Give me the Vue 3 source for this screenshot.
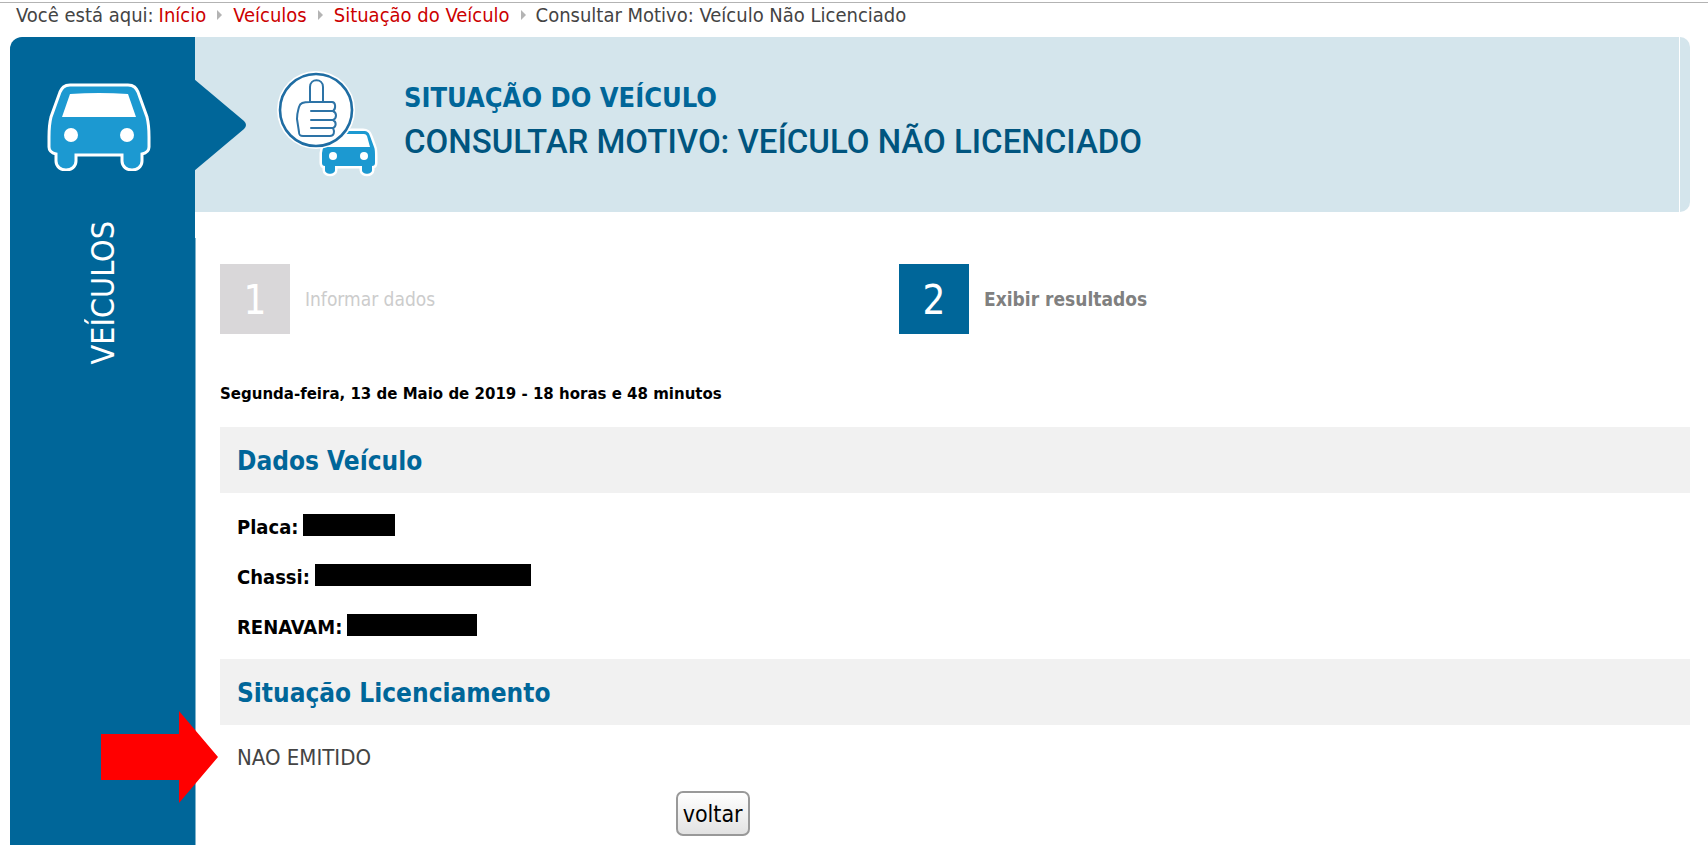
<script setup>
const trail = [
  { label: 'Início', href: '#inicio' },
  { label: 'Veículos', href: '#veiculos' },
  { label: 'Situação do Veículo', href: '#situacao' },
]

const steps = [
  { number: 1, label: 'Informar dados', active: false },
  { number: 2, label: 'Exibir resultados', active: true },
]

// Values are masked; only the length of each bar is kept.
const vehicle = [
  { label: 'Placa:', width: 92 },
  { label: 'Chassi:', width: 216 },
  { label: 'RENAVAM:', width: 130 },
]
</script>

<template>
  <div class="page">
    <nav class="breadcrumb" aria-label="Você está aqui">
      <span>Você está aqui:</span>
      <template v-for="item in trail" :key="item.label">
        <a :href="item.href">{{ item.label }}</a>
        <svg class="sep" viewBox="0 0 5 10" aria-hidden="true"><path d="M0 0 5 5 0 10Z" fill="#b4b4b4" /></svg>
      </template>
      <span>Consultar Motivo: Veículo Não Licenciado</span>
    </nav>

    <div class="body">
      <aside class="sidebar">
        <svg class="car" viewBox="0 0 104 88" aria-hidden="true">
          <path d="M23 2H81C87 2 89 5 91 9L100 34C102 42 102 46 102 54V64C102 68 99 70 95 71V78C95 90 75 90 75 78V72H29V78C29 90 9 90 9 78V71C5 70 2 68 2 64V54C2 46 2 42 4 34L13 9C15 5 17 2 23 2Z" fill="#1c99d1" stroke="#fff" stroke-width="3" />
          <path d="M23 11Q52 9 81 11L89 34H15Z" fill="#fff" />
          <circle cx="24" cy="52" r="7" fill="#fff" />
          <circle cx="80" cy="52" r="7" fill="#fff" />
        </svg>
        <span class="area">VEÍCULOS</span>
        <svg class="pointer" viewBox="0 0 52 94" aria-hidden="true"><path d="M0 1 50 43Q54 47 50 51L0 93Z" fill="#006699" /></svg>
      </aside>

      <main class="main">
        <header class="banner">
          <svg class="service" viewBox="0 0 104 110" aria-hidden="true">
            <g fill="#1c99d1">
              <path d="M56 60H87C92 60 93 62 94 65L98 76C99 78 99 82 99 86V92C99 94 98 95 96 95V99C96 104 86 104 86 99V95H59V99C59 104 49 104 49 99V95C47 95 46 94 46 92V82Q46 78 49 74Z" stroke="#fff" stroke-width="5" stroke-linejoin="round" />
              <path d="M56 60H87C92 60 93 62 94 65L98 76C99 78 99 82 99 86V92C99 94 98 95 96 95V99C96 104 86 104 86 99V95H59V99C59 104 49 104 49 99V95C47 95 46 94 46 92V82Q46 78 49 74Z" />
            </g>
            <path d="M56 63H88Q90 63 91 65L94 76H51Z" fill="#fff" />
            <circle cx="57" cy="85" r="4" fill="#fff" />
            <circle cx="88" cy="85" r="4" fill="#fff" />
            <circle cx="40" cy="39" r="39" fill="#fff" />
            <circle cx="40" cy="39" r="36" fill="#fff" stroke="#1f6da3" stroke-width="2.6" />
            <path d="M34 31V16C34 7 47 7 47 16V31H56C60 31 60 38 57 40C61 42 61 47 57 49C61 51 60 56 57 57C59 61 58 65 54 65H27C23 65 23 63 23 61L21 48C21 42 22 40 23 36C24 32 27 31 34 31ZM34 31H47M35 40H57M35 49H57M35 57H57" fill="none" stroke="#2d73a6" stroke-width="2" stroke-linejoin="round" stroke-linecap="round" />
          </svg>
          <div class="titles">
            <p class="group">SITUAÇÃO DO VEÍCULO</p>
            <h1>CONSULTAR MOTIVO: VEÍCULO NÃO LICENCIADO</h1>
          </div>
        </header>

        <div class="content">
          <ol class="steps">
            <li v-for="step in steps" :key="step.number" class="step" :class="{ active: step.active }">
              <span class="number">{{ step.number }}</span>
              <span>{{ step.label }}</span>
            </li>
          </ol>

          <p class="date">Segunda-feira, 13 de Maio de 2019 - 18 horas e 48 minutos</p>

          <section>
            <h2>Dados Veículo</h2>
            <dl class="fields">
              <div v-for="field in vehicle" :key="field.label" class="field">
                <dt>{{ field.label }}</dt>
                <dd class="mask" :style="{ width: field.width + 'px' }"></dd>
              </div>
            </dl>
          </section>

          <section>
            <h2>Situação Licenciamento</h2>
            <p class="status">
              NAO EMITIDO
              <svg class="arrow" viewBox="0 0 117 92" aria-hidden="true"><path d="M0 23H78V0L117 46 78 92V69H0Z" fill="#f00" /></svg>
            </p>
          </section>

          <div class="actions"><button type="button">voltar</button></div>
        </div>
      </main>
    </div>
  </div>
</template>

<style>
body {
  background: #fff;
}
</style>

<style scoped>
.page {
  box-sizing: border-box;
  min-height: 100vh;
  display: flex;
  flex-direction: column;
  padding: 2px 18px 0 10px;
  background: linear-gradient(#b3b3b3, #b3b3b3) 0 2px / 100% 1px no-repeat;
  font-family: "DejaVu Sans Condensed", "Noto Sans", sans-serif;
  font-size: 20px;
  color: #444;
}
.breadcrumb {
  display: flex;
  align-items: center;
  height: 25px;
  padding: 0 6px 10px;
  white-space: nowrap;
}
.breadcrumb a {
  margin-left: 5px;
  color: #c00;
  text-decoration: none;
}
.sep {
  width: 5px;
  height: 10px;
  margin: 0 6px 0 11px;
}
.sep + span {
  margin-left: 4px;
}
.body {
  flex: 1;
  display: flex;
}
.sidebar {
  position: relative;
  flex: none;
  width: 185px;
  display: flex;
  flex-direction: column;
  align-items: center;
  background: #006699;
  border-top-left-radius: 12px;
}
.car {
  width: 104px;
  height: 88px;
  margin: 46px 8px 0 0;
}
.area {
  margin-top: 50px;
  writing-mode: vertical-rl;
  transform: rotate(180deg);
  color: #fff;
  font-size: 32px;
  line-height: 40px;
}
.pointer {
  position: absolute;
  left: 184px;
  top: 41px;
  width: 52px;
  height: 94px;
}
.main {
  flex: 1;
  min-width: 0;
  display: flex;
  flex-direction: column;
}
.banner {
  display: flex;
  box-sizing: border-box;
  height: 175px;
  padding: 34px 0 0 81px;
  border-radius: 0 10px 10px 0;
  background: linear-gradient(#fff, #fff) right 10px top / 1px 100% no-repeat #d4e5ec;
}
.service {
  flex: none;
  width: 104px;
  height: 110px;
}
.titles {
  margin: 9px 0 0 24px;
  white-space: nowrap;
}
.group {
  margin: 0;
  font-size: 27px;
  line-height: 36px;
  font-weight: bold;
  color: #006699;
}
h1 {
  margin: 3px 0 0;
  font-family: Roboto, sans-serif;
  font-size: 33px;
  line-height: 46px;
  font-weight: 500;
  color: #00557f;
}
.content {
  flex: 1;
  margin-top: 26px;
  padding: 26px 0 9px 24px;
  border-left: 1px solid #80b3cc;
}
.steps {
  display: grid;
  grid-template-columns: 679fr 791fr;
  margin: 0;
  padding: 0;
  list-style: none;
}
.step {
  display: flex;
  align-items: center;
  gap: 15px;
  font-size: 19px;
  line-height: 24px;
  color: #ccc;
}
.number {
  width: 70px;
  height: 70px;
  background: #d9d7d9;
  color: #fff;
  font-size: 40px;
  line-height: 72px;
  font-weight: normal;
  text-align: center;
}
.active {
  color: #808080;
  font-weight: bold;
}
.active .number {
  background: #006699;
}
.date {
  margin: 48px 0 21px;
  font-family: "DejaVu Sans", sans-serif;
  font-size: 15px;
  line-height: 24px;
  font-weight: bold;
  color: #000;
}
h2 {
  margin: 0;
  padding: 2px 17px 0;
  background: #f1f1f1;
  color: #006699;
  font-size: 26px;
  line-height: 64px;
}
.fields {
  display: grid;
  gap: 24px;
  margin: 0;
  padding: 21px 17px 19px;
}
.field {
  display: flex;
  align-items: center;
  gap: 5px;
  color: #000;
  font-weight: bold;
  line-height: 24px;
}
.mask {
  height: 22px;
  margin: 0 0 4px;
  background: #000;
}
.status {
  position: relative;
  margin: 0;
  padding: 20px 17px;
  font-size: 22px;
  line-height: 26px;
}
.arrow {
  position: absolute;
  left: -119px;
  top: -14px;
  width: 117px;
  height: 92px;
}
.actions {
  padding-left: 31%;
}
button {
  height: 45px;
  padding: 0 5px;
  border: 2px solid #999;
  border-radius: 7px;
  background: linear-gradient(#fff, #e2e2e2);
  color: #000;
  font: inherit;
  font-size: 23px;
}
</style>
